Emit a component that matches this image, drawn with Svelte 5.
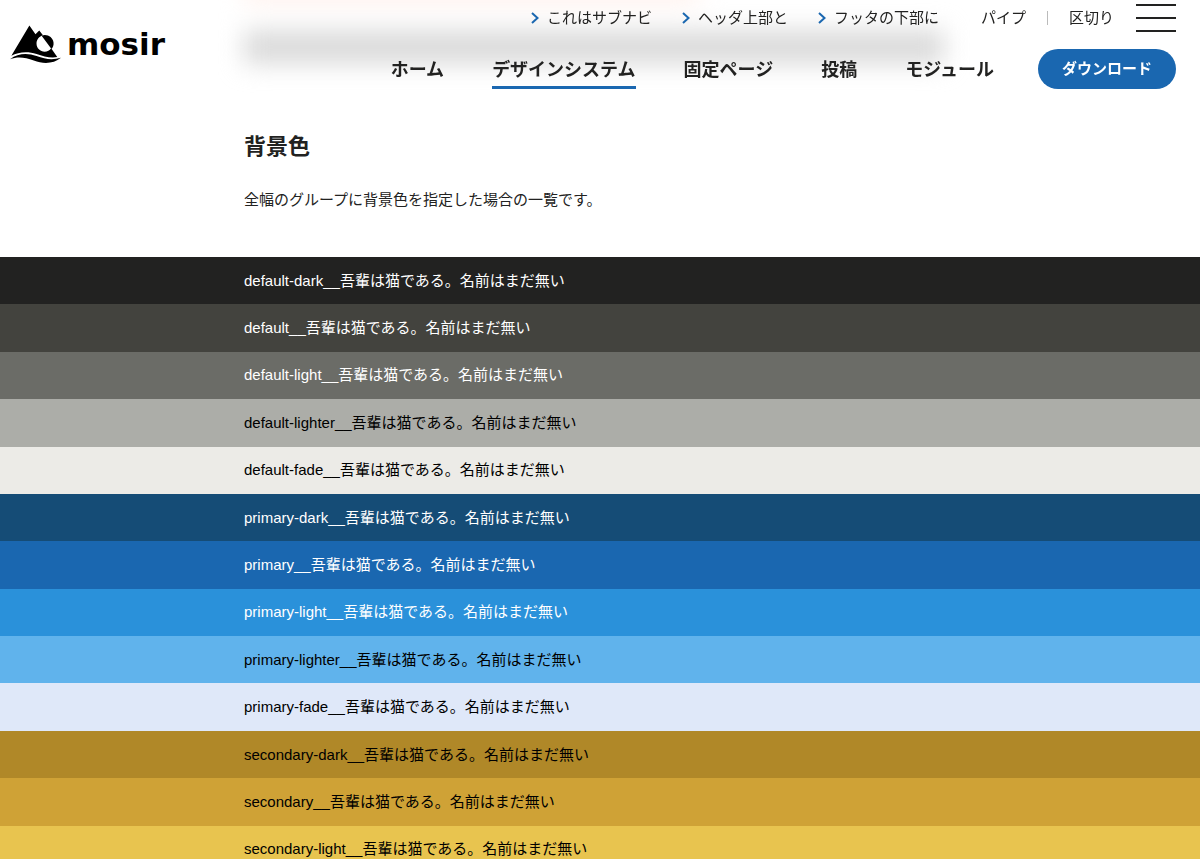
<script>
	const mainNav = [
		{ label: 'ホーム' },
		{ label: 'デザインシステム', current: true },
		{ label: '固定ページ' },
		{ label: '投稿' },
		{ label: 'モジュール' }
	];

	const subNav = ['これはサブナビ', 'ヘッダ上部と', 'フッタの下部に'];
	const pipeNav = ['パイプ', '区切り'];

	const bands = [
		'default-dark',
		'default',
		'default-light',
		'default-lighter',
		'default-fade',
		'primary-dark',
		'primary',
		'primary-light',
		'primary-lighter',
		'primary-fade',
		'secondary-dark',
		'secondary',
		'secondary-light'
	];

	let menuOpen = $state(false);
</script>

<header class="header">
	<div class="header-haze" aria-hidden="true"></div>

	<a class="logo" href="#home" aria-label="mosir">
		<svg class="logo-mark" viewBox="0 0 150 111" aria-hidden="true">
			<path d="M57 1L75 27L86 16L97 30C86 33 78 43 78 54C78 68 89 78 102 78C110 78 117 74 121 68L139 94C120 98 98 92 78 85C52 76 24 79 4 90Z" />
			<path d="M93 31C109 25 126 35 128 51C129 59 126 66 122 70Z" />
			<path d="M0 100C24 82 52 81 78 91C104 101 126 103 150 96C128 114 98 115 70 104C44 94 22 92 0 100Z" />
		</svg>
		<span class="logo-text">mosir</span>
	</a>

	<div class="header-nav">
		<div class="header-upper">
			<nav class="sub-nav" aria-label="サブナビ">
				{#each subNav as label}
					<a href="#sub">
						<svg class="chevron" viewBox="0 0 8 12" aria-hidden="true">
							<path d="M1 1L6.500 6L1 11" />
						</svg>
						{label}
					</a>
				{/each}
			</nav>
			<nav class="pipe-nav" aria-label="パイプ区切り">
				{#each pipeNav as label}
					<a href="#pipe">{label}</a>
				{/each}
			</nav>
			<button
				class="menu"
				aria-label="メニュー"
				aria-expanded={menuOpen}
				onclick={() => (menuOpen = !menuOpen)}
			>
				<span></span>
				<span></span>
				<span></span>
			</button>
		</div>

		<div class="header-lower">
			<nav class="main-nav" aria-label="メイン">
				{#each mainNav as item}
					<a href="#nav" class:current={item.current} aria-current={item.current ? 'page' : undefined}>
						{item.label}
					</a>
				{/each}
			</nav>
			<a class="download" href="#download">ダウンロード</a>
		</div>
	</div>
</header>

<main>
	<section class="intro">
		<h2>背景色</h2>
		<p>全幅のグループに背景色を指定した場合の一覧です。</p>
	</section>

	<div class="bands">
		{#each bands as name}
			<p class="band {name}">{name}__吾輩は猫である。名前はまだ無い</p>
		{/each}
	</div>
</main>

<style>
	:global(body) {
		background: #fff;
		color: #222221;
		font-family: "Liberation Sans", "Noto Sans CJK JP", sans-serif;
		font-size: 15px;
		line-height: 24px;
	}

	a {
		color: inherit;
		text-decoration: none;
	}

	/* header */
	.header {
		position: relative;
		display: flex;
		justify-content: space-between;
		align-items: flex-start;
		padding: 4px 24px 8px 10px;
		overflow: hidden;
	}

	.header-haze {
		position: absolute;
		top: 30px;
		left: 244px;
		right: 256px;
		height: 34px;
		background: #dadada;
		filter: blur(12px);
	}

	.header-haze::before {
		content: "";
		position: absolute;
		top: -50px;
		left: 0;
		width: 65%;
		height: 22px;
		background: #fff0eb;
	}

	.logo {
		position: relative;
		display: flex;
		align-items: center;
		gap: 6px;
		padding-top: 20px;
		color: #000;
	}

	.logo-mark {
		width: 51px;
		height: 38px;
	}

	.logo-text {
		font-family: "DejaVu Sans", sans-serif;
		font-size: 31px;
		font-weight: 700;
		line-height: 40px;
	}

	.header-nav {
		position: relative;
		display: flex;
		flex-direction: column;
		gap: 16px;
	}

	.header-upper {
		display: flex;
		justify-content: flex-end;
		align-items: center;
		height: 28px;
	}

	.sub-nav {
		display: flex;
		gap: 30px;
		margin-right: 42px;
	}

	.sub-nav a {
		display: flex;
		align-items: center;
		gap: 8px;
	}

	.chevron {
		width: 8px;
		height: 12px;
		fill: none;
		stroke: #1a67b0;
		stroke-width: 2;
	}

	.pipe-nav {
		display: flex;
		margin-right: 22px;
	}

	.pipe-nav a + a {
		display: flex;
		align-items: center;
		margin-left: 21px;
	}

	.pipe-nav a + a::before {
		content: "";
		width: 1px;
		height: 14px;
		margin-right: 21px;
		background: #bbb;
	}

	.menu {
		display: flex;
		flex-direction: column;
		justify-content: space-between;
		width: 40px;
		height: 28px;
		padding: 0;
		border: 0;
		background: none;
		cursor: pointer;
	}

	.menu span {
		height: 2px;
		background: #222221;
	}

	.header-lower {
		display: flex;
		align-items: center;
		justify-content: flex-end;
		gap: 44px;
	}

	.main-nav {
		display: flex;
		gap: 48px;
	}

	.main-nav a {
		padding: 10px 0 4px;
		border-bottom: 3px solid transparent;
		font-size: 18px;
		font-weight: 700;
		line-height: 24px;
	}

	.main-nav a.current {
		border-bottom-color: #1a67b0;
	}

	.download {
		padding: 8px 24px;
		border-radius: 20px;
		background: #1a67b0;
		color: #fff;
		font-weight: 700;
	}

	/* content */
	.intro {
		padding: 32px 24px 45px;
		margin-left: 220px;
	}

	h2 {
		margin: 0 0 23px;
		font-size: 22px;
		line-height: 36px;
	}

	p {
		margin: 0;
	}

	.bands {
		display: grid;
		grid-auto-rows: 1fr;
		min-height: 616px;
	}

	.band {
		display: flex;
		align-items: center;
		padding: 0 24px 0 244px;
		color: #000;
	}

	.default-dark { background: #222221; color: #fff; }
	.default { background: #43433e; color: #fff; }
	.default-light { background: #6b6c67; color: #fff; }
	.default-lighter { background: #acada8; }
	.default-fade { background: #ecebe7; }
	.primary-dark { background: #154c76; color: #fff; }
	.primary { background: #1a67b0; color: #fff; }
	.primary-light { background: #2a91da; color: #fff; }
	.primary-lighter { background: #60b3ec; }
	.primary-fade { background: #dfe8f9; }
	.secondary-dark { background: #b08828; }
	.secondary { background: #cfa236; }
	.secondary-light { background: #e8c44f; }
</style>
